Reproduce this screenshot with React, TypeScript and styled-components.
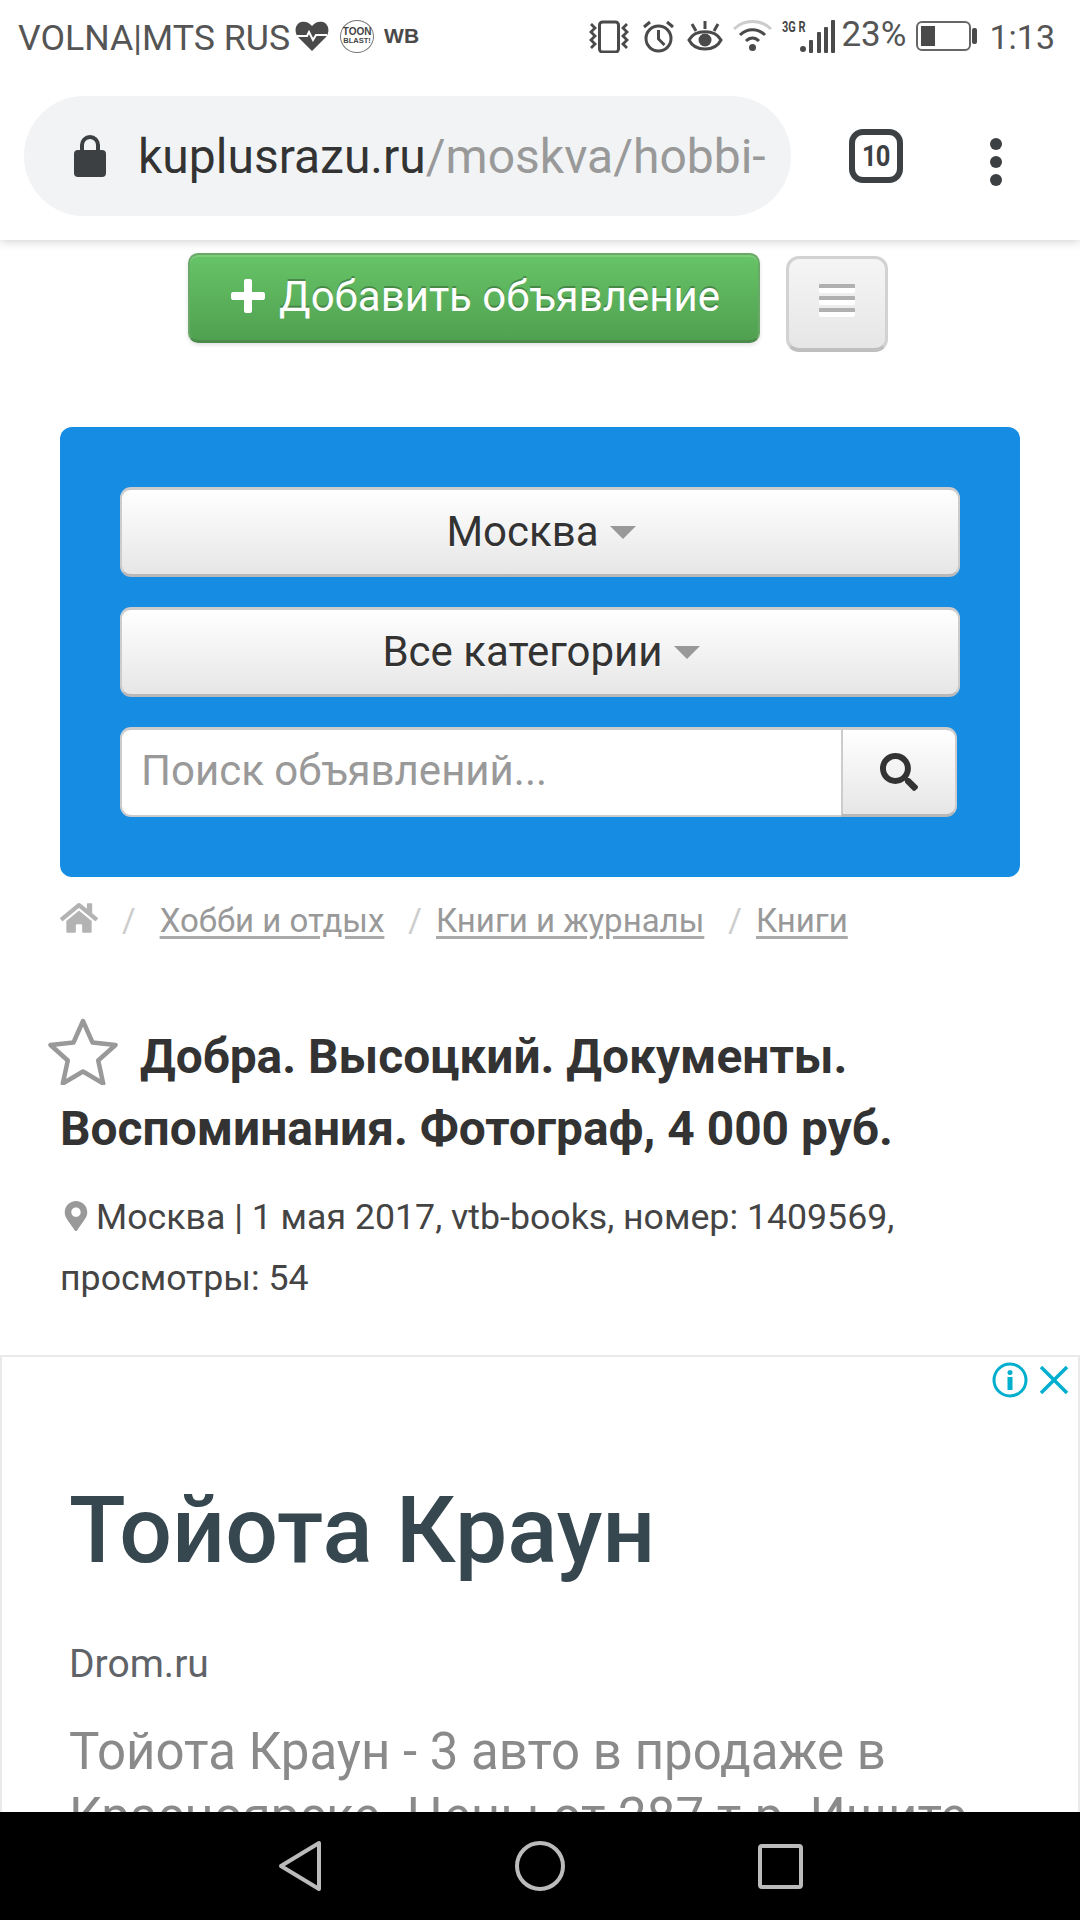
import React from "react";
import styled, { createGlobalStyle } from "styled-components";
import { FaHome, FaSearch, FaMapMarkerAlt } from "react-icons/fa";

const Global = createGlobalStyle`
  html, body { margin: 0; padding: 0; background: #fff; }
  * { box-sizing: border-box; }
  body { font-family: Roboto, "Noto Sans", sans-serif; }
`;

const Page = styled.div`
  position: relative;
  width: 1080px;
  height: 1920px;
  overflow: hidden;
  display: flex;
  flex-direction: column;
  background: #fff;
`;

const StatusBar = styled.div`
  position: relative;
  z-index: 3;
  background: #fff;
  height: 72px;
  flex: none;
  display: flex;
  align-items: center;
  justify-content: space-between;
  padding: 0 25px 0 18px;
  color: #555;
`;
const StatusLeft = styled.div`
  display: flex;
  align-items: center;
`;
const StatusRight = styled.div`
  display: flex;
  align-items: center;
`;
const Carrier = styled.span`
  font-size: 35.7px;
  line-height: 72px;
  margin: 3px 5px 0 0;
`;
const StatusIcon = styled.svg<{ $gap?: number }>`
  display: block;
  flex: none;
  margin-left: ${(p) => p.$gap ?? 0}px;
`;
const ToonBadge = styled.span`
  width: 34px;
  height: 33px;
  margin-left: 11px;
  border: 1px solid #777;
  border-radius: 50%;
  display: flex;
  flex-direction: column;
  align-items: center;
  justify-content: center;
  font-family: "Liberation Sans", sans-serif;
  font-weight: 700;
  color: #444;
`;
const ToonLine = styled.span`
  font-size: 10px;
  line-height: 10px;
  white-space: nowrap;
`;
const BlastLine = styled.span`
  font-size: 7.5px;
  line-height: 8px;
  white-space: nowrap;
`;
const WbMark = styled.span`
  margin-left: 10px;
  font-family: "Liberation Sans", sans-serif;
  font-size: 21px;
  font-weight: 700;
  color: #4a4a4a;
`;
const NetLabel = styled.span`
  position: absolute;
  left: 0;
  top: 0;
  font-size: 14px;
  line-height: 14px;
  font-weight: 700;
  transform: scaleX(0.78);
  transform-origin: left top;
  white-space: nowrap;
  color: #444;
`;
const NetGroup = styled.span`
  position: relative;
  width: 53px;
  height: 33px;
  margin-left: 10px;
  display: block;
`;
const SignalBars = styled.svg`
  position: absolute;
  right: 0;
  top: 0;
`;
const Percent = styled.span`
  font-size: 35px;
  line-height: 72px;
  margin-left: 6px;
  margin-top: -2px;
`;
const Clock = styled.span`
  font-size: 34px;
  line-height: 72px;
  margin: 2px 0 0 12px;
`;

const BrowserBar = styled.div`
  position: relative;
  z-index: 2;
  height: 168px;
  flex: none;
  display: flex;
  align-items: flex-start;
  padding: 24px 0 0 24px;
  background: #fff;
  box-shadow: 0 1px 10px rgba(0, 0, 0, 0.2);
`;
const UrlPill = styled.div`
  width: 767px;
  height: 120px;
  border-radius: 60px;
  background: #f1f3f4;
  display: flex;
  align-items: center;
  padding: 0 0 0 50px;
`;
const LockIcon = styled.svg`
  flex: none;
  margin-right: 32px;
`;
const UrlText = styled.div`
  font-size: 48px;
  white-space: nowrap;
  color: #999;
`;
const UrlHost = styled.span`
  color: #333;
`;
const TabCount = styled.div`
  width: 54px;
  height: 54px;
  margin: 33px 0 0 58px;
  border: 6px solid #3c4043;
  border-radius: 14px;
  display: flex;
  align-items: center;
  justify-content: center;
  color: #3c4043;
  flex: none;
`;
const TabDigits = styled.span`
  font-size: 29px;
  font-weight: 700;
  letter-spacing: -1px;
  transform: scaleX(0.88);
`;
const KebabMenu = styled.div`
  margin: 42px 0 0 87px;
  display: flex;
  flex-direction: column;
  gap: 6px;
`;
const KebabDot = styled.span`
  width: 12px;
  height: 12px;
  border-radius: 50%;
  background: #3c4043;
`;

const Content = styled.div`
  flex: 1;
  min-height: 0;
  overflow: hidden;
  display: flex;
  flex-direction: column;
`;
const TopActions = styled.div`
  display: flex;
  align-items: flex-start;
  padding: 13px 0 0 188px;
  gap: 26px;
  height: 187px;
  flex: none;
`;
const AddButton = styled.div`
  width: 572px;
  height: 90px;
  border-radius: 10px;
  border: 2px solid #6aa96a;
  border-bottom: 3px solid #4b8b4b;
  background: linear-gradient(#67c467, #50a050);
  box-shadow: inset 0 2px 0 rgba(255, 255, 255, 0.15), 0 2px 4px rgba(0, 0, 0, 0.12);
  display: flex;
  align-items: center;
  justify-content: center;
  gap: 14px;
  color: #fff;
  font-size: 42px;
  text-shadow: 0 -2px 0 rgba(0, 0, 0, 0.25);
  padding: 0 0 3px 3px;
`;
const MenuButton = styled.div`
  width: 102px;
  height: 96px;
  margin-top: 3px;
  border-radius: 13px;
  border: 3px solid #d2d2d2;
  border-bottom: 4px solid #bfbfbf;
  background: linear-gradient(#f5f5f5, #e6e6e6);
  display: flex;
  flex-direction: column;
  align-items: center;
  gap: 3px;
  padding-top: 25px;
`;
const MenuBar = styled.span`
  width: 36px;
  height: 9px;
  background: #fff;
  border-top: 4px solid #b0b0b0;
  border-radius: 1px 1px 2px 2px;
`;
const SearchPanel = styled.div`
  margin: 0 60px;
  height: 450px;
  flex: none;
  border-radius: 12px;
  background: #178ce3;
  padding: 60px;
  display: flex;
  flex-direction: column;
  gap: 30px;
`;
const SelectButton = styled.div`
  height: 90px;
  border-radius: 11px;
  border: 2px solid #ccc;
  border-top-width: 3px;
  border-bottom: 3px solid #b8b8b8;
  background: linear-gradient(#fff, #e6e6e6);
  display: flex;
  align-items: center;
  justify-content: center;
  gap: 11px;
  font-size: 42px;
  color: #333;
  padding: 0 0 2px 2px;
  text-shadow: 0 1px 1px rgba(255, 255, 255, 0.75);
`;
const Caret = styled.span`
  width: 0;
  height: 0;
  border-left: 13px solid transparent;
  border-right: 13px solid transparent;
  border-top: 13px solid #999;
  margin-top: 2px;
`;
const SearchRow = styled.div`
  width: 837px;
  height: 90px;
  display: flex;
`;
const SearchInput = styled.div`
  flex: 1;
  background: #fff;
  border: 2px solid #ccc;
  border-right: 0;
  border-top-width: 3px;
  border-radius: 11px 0 0 11px;
  display: flex;
  align-items: center;
  padding: 0 0 4px 19px;
  font-size: 42px;
  color: #999;
`;
const SearchButton = styled.div`
  width: 116px;
  flex: none;
  border: 2px solid #ccc;
  border-top-width: 3px;
  border-bottom: 3px solid #b8b8b8;
  border-radius: 0 11px 11px 0;
  background: linear-gradient(#fff, #e6e6e6);
  display: flex;
  align-items: center;
  justify-content: center;
  color: #333;
`;
const Crumbs = styled.nav`
  display: flex;
  align-items: center;
  height: 50px;
  margin: 18px 0 0 60px;
  flex: none;
  font-size: 33px;
  color: #aaa;
`;
const CrumbHome = styled.span`
  display: block;
  height: 36px;
  margin-top: -6px;
  color: #b3b3b3;
`;
const CrumbSep = styled.span<{ $gap: number; $after: number }>`
  color: #ccc;
  font-size: 33px;
  margin: 0 ${(p) => p.$after}px 0 ${(p) => p.$gap}px;
`;
const CrumbLink = styled.a`
  color: #999;
  text-decoration: underline;
  text-decoration-color: #aaa;
  text-underline-offset: 4px;
`;
const Title = styled.h1`
  position: relative;
  margin: 76px 60px 0;
  font-size: 47.9px;
  font-weight: 700;
  line-height: 72px;
  color: #333;
  text-indent: 80px;
`;
const FavStar = styled.svg`
  position: absolute;
  left: -12px;
  top: -4px;
`;
const Meta = styled.div`
  margin: 22px 60px 0;
  font-size: 35.7px;
  line-height: 61px;
  color: #444;
`;
const PinIcon = styled.span`
  display: inline-block;
  margin: 0 5px 0 1px;
  color: #999;
  vertical-align: -2px;
  line-height: 0;
`;
const AdFrame = styled.div`
  position: relative;
  margin-top: 46px;
  flex: 1;
  min-height: 0;
  border: 2px solid #eaeaea;
  border-bottom: 0;
  padding: 0 0 0 67px;
  overflow: hidden;
`;
const AdControls = styled.div`
  position: absolute;
  top: 5px;
  right: 9px;
  display: flex;
  gap: 11px;
  align-items: center;
`;
const AdTitle = styled.div`
  margin-top: 120px;
  font-size: 93px;
  font-weight: 500;
  line-height: 108px;
  color: #37474f;
`;
const AdSource = styled.div`
  margin-top: 57px;
  font-size: 39px;
  line-height: 44px;
  color: #5f6368;
`;
const AdBody = styled.div`
  margin-top: 33px;
  width: 980px;
  font-size: 51px;
  line-height: 65px;
  color: #8a8a8a;
`;
const NavBar = styled.div`
  height: 108px;
  flex: none;
  background: #000;
  display: flex;
  align-items: center;
  justify-content: center;
  gap: 0;
`;
const BackIcon = styled.svg`
  display: block;
`;
const HomeIcon = styled.svg`
  display: block;
  margin-left: 193px;
`;
const RecentsIcon = styled.svg`
  display: block;
  margin-left: 193px;
`;

export default function App() {
  return (
    <Page>
      <Global />
      <StatusBar>
        <StatusLeft>
          <Carrier>VOLNA|MTS RUS</Carrier>
          <svg width="34" height="32" viewBox="0 0 34 32">
            <path d="M17 31 3 17C-1 12 0 4 6 2c4-1 8 0 11 4 3-4 7-5 11-4 6 2 7 10 3 15z" fill="#4a4a4a" />
            <path d="M2 16h10l2-4 4 8 3-5h11" fill="none" stroke="#fff" strokeWidth="2" />
          </svg>
          <ToonBadge>
            <ToonLine>TOON</ToonLine>
            <BlastLine>BLAST!</BlastLine>
          </ToonBadge>
          <WbMark>WB</WbMark>
        </StatusLeft>
        <StatusRight>
          <StatusIcon width="42" height="33" viewBox="0 0 42 33">
            <rect x="11.500" y="2" width="19" height="30" rx="3" fill="none" stroke="#4a4a4a" strokeWidth="3" />
            <path d="M3 4l4 4-4 4 4 4-4 4 4 4-4 4M39 4l-4 4 4 4-4 4 4 4-4 4 4 4" fill="none" stroke="#4a4a4a" strokeWidth="2.800" />
          </StatusIcon>
          <StatusIcon $gap={12} width="33" height="33" viewBox="0 0 33 33">
            <circle cx="16.500" cy="18.500" r="12.500" fill="none" stroke="#4a4a4a" strokeWidth="3" />
            <path d="M16.500 10v9l6 6M2 7l6-5M31 7l-6-5" fill="none" stroke="#4a4a4a" strokeWidth="3" />
          </StatusIcon>
          <StatusIcon $gap={12} width="36" height="32" viewBox="0 0 36 32">
            <path d="M2 20C8 9 28 9 34 20 28 32 8 32 2 20z" fill="none" stroke="#4a4a4a" strokeWidth="3" />
            <circle cx="18" cy="20" r="6.500" fill="#4a4a4a" />
            <path d="M18 1v8M5 4l4 7M31 4l-4 7" stroke="#4a4a4a" strokeWidth="3" />
          </StatusIcon>
          <StatusIcon $gap={10} width="39" height="32" viewBox="0 0 39 32">
            <path d="M1 9C11-1 28-1 38 9" fill="none" stroke="#ccc" strokeWidth="3" />
            <path d="M7 15c7-7 18-7 25 0M13 21c4-4 9-4 13 0" fill="none" stroke="#4a4a4a" strokeWidth="3" />
            <circle cx="19.500" cy="27.500" r="3.500" fill="#4a4a4a" />
          </StatusIcon>
          <NetGroup>
            <NetLabel>3G R</NetLabel>
            <SignalBars width="35" height="33" viewBox="0 0 35 33">
              <circle cx="3" cy="29" r="3" fill="#4a4a4a" />
              <rect x="9" y="20" width="4" height="13" rx="1" fill="#4a4a4a" />
              <rect x="17" y="12" width="4" height="21" rx="1" fill="#4a4a4a" />
              <rect x="24" y="7" width="4" height="26" rx="1" fill="#4a4a4a" />
              <rect x="31" y="0" width="4" height="33" rx="1" fill="#4a4a4a" />
            </SignalBars>
          </NetGroup>
          <Percent>23%</Percent>
          <StatusIcon $gap={10} width="61" height="30" viewBox="0 0 61 30">
            <rect x="1" y="1" width="53" height="28" rx="5" fill="none" stroke="#666" strokeWidth="2" />
            <rect x="5" y="5" width="14" height="20" fill="#4a4a4a" />
            <rect x="56" y="7" width="5" height="16" rx="2" fill="#4a4a4a" />
          </StatusIcon>
          <Clock>1:13</Clock>
        </StatusRight>
      </StatusBar>

      <BrowserBar>
        <UrlPill>
          <LockIcon width="32" height="42" viewBox="0 0 32 42">
            <path d="M8 18v-8a8 8 0 0 1 16 0v8" fill="none" stroke="#3c4043" strokeWidth="4" />
            <rect x="0" y="15" width="32" height="27" rx="4" fill="#3c4043" />
          </LockIcon>
          <UrlText>
            <UrlHost>kuplusrazu.ru</UrlHost>/moskva/hobbi-
          </UrlText>
        </UrlPill>
        <TabCount>
          <TabDigits>10</TabDigits>
        </TabCount>
        <KebabMenu>
          <KebabDot />
          <KebabDot />
          <KebabDot />
        </KebabMenu>
      </BrowserBar>

      <Content>
        <TopActions>
          <AddButton>
            <svg width="34" height="34" viewBox="0 0 34 34">
              <path d="M13 2a2 2 0 0 1 2-2h4a2 2 0 0 1 2 2v11h11a2 2 0 0 1 2 2v4a2 2 0 0 1-2 2H21v11a2 2 0 0 1-2 2h-4a2 2 0 0 1-2-2V21H2a2 2 0 0 1-2-2v-4a2 2 0 0 1 2-2h11z" fill="#fff" />
            </svg>
            <span>Добавить объявление</span>
          </AddButton>
          <MenuButton>
            <MenuBar />
            <MenuBar />
            <MenuBar />
          </MenuButton>
        </TopActions>

        <SearchPanel>
          <SelectButton>
            <span>Москва</span>
            <Caret />
          </SelectButton>
          <SelectButton>
            <span>Все категории</span>
            <Caret />
          </SelectButton>
          <SearchRow>
            <SearchInput>Поиск объявлений...</SearchInput>
            <SearchButton>
              <FaSearch size={38} />
            </SearchButton>
          </SearchRow>
        </SearchPanel>

        <Crumbs>
          <CrumbHome>
            <FaHome size={38} />
          </CrumbHome>
          <CrumbSep $gap={24} $after={24}>/</CrumbSep>
          <CrumbLink>Хобби и отдых</CrumbLink>
          <CrumbSep $gap={24} $after={14}>/</CrumbSep>
          <CrumbLink>Книги и журналы</CrumbLink>
          <CrumbSep $gap={24} $after={14}>/</CrumbSep>
          <CrumbLink>Книги</CrumbLink>
        </Crumbs>

        <Title>
          <FavStar width="70" height="68" viewBox="0 0 70 68">
            <path d="M35 4l9.500 21.500 23 2.500-17.300 15.500 5 23L35 54.500 14.800 66.500l5-23L2.500 28l23-2.500z" fill="none" stroke="#999" strokeWidth="4.500" strokeLinejoin="round" />
          </FavStar>
          Добра. Высоцкий. Документы. Воспоминания. Фотограф, 4 000 руб.
        </Title>
        <Meta>
          <PinIcon>
            <FaMapMarkerAlt size={30} />
          </PinIcon>
          Москва | 1 мая 2017, vtb-books, номер: 1409569, просмотры: 54
        </Meta>

        <AdFrame>
          <AdControls>
            <svg width="36" height="36" viewBox="0 0 36 36">
              <circle cx="18" cy="18" r="16" fill="none" stroke="#00aecd" strokeWidth="3" />
              <circle cx="18" cy="10.500" r="2.500" fill="#00aecd" />
              <rect x="15.500" y="15" width="5" height="13" fill="#00aecd" />
            </svg>
            <svg width="30" height="28" viewBox="0 0 30 28">
              <path d="M2 1l26 26M28 1 2 27" stroke="#00aecd" strokeWidth="3.500" />
            </svg>
          </AdControls>
          <AdTitle>Тойота Краун</AdTitle>
          <AdSource>Drom.ru</AdSource>
          <AdBody>Тойота Краун - 3 авто в продаже в Красноярске. Цены от 287 т.р. Ищите</AdBody>
        </AdFrame>
      </Content>

      <NavBar>
        <BackIcon width="44" height="52" viewBox="0 0 44 52">
          <path d="M41 3v46L3 26z" fill="none" stroke="#bbb" strokeWidth="4" strokeLinejoin="round" />
        </BackIcon>
        <HomeIcon width="50" height="50" viewBox="0 0 50 50">
          <circle cx="25" cy="25" r="23" fill="none" stroke="#bbb" strokeWidth="4" />
        </HomeIcon>
        <RecentsIcon width="45" height="45" viewBox="0 0 45 45">
          <rect x="2" y="2" width="41" height="41" rx="2" fill="none" stroke="#bbb" strokeWidth="4" />
        </RecentsIcon>
      </NavBar>
    </Page>
  );
}
